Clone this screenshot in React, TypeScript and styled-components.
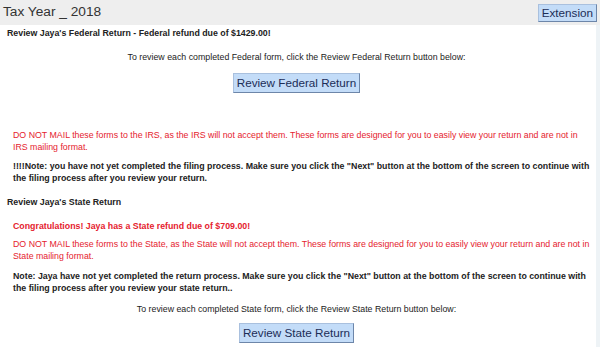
import React from "react";
import styled, { createGlobalStyle } from "styled-components";

const Global = createGlobalStyle`
  html, body { margin: 0; padding: 0; background: #ffffff; }
  body { font-family: "Liberation Sans", Arial, sans-serif; }
`;

const Page = styled.div`
  width: 600px;
  height: 347px;
  overflow: hidden;
  display: flex;
  flex-direction: column;
  background: #ffffff;
`;

const Header = styled.header`
  height: 25px;
  flex: none;
  display: flex;
  align-items: center;
  justify-content: space-between;
  padding: 0 3px 0 3px;
  background: #eeeeee;
`;

const Title = styled.h1`
  margin: 0 0 1px 0;
  font-size: 13.7px;
  font-weight: normal;
  color: #333333;
  line-height: 1;
`;

const BlueButton = styled.button<{ $small?: boolean }>`
  font-family: "Liberation Sans", Arial, sans-serif;
  font-size: 11.7px;
  color: #1c2d57;
  background: #c3dcf8;
  height: ${(p) => (p.$small ? 18 : 20)}px;
  padding: 0 3px;
  border: 1px solid;
  border-color: #a9c0de #6d86a9 #6d86a9 #a9c0de;
  line-height: 1;
  cursor: pointer;
`;

const Body = styled.div`
  flex: 1;
  display: flex;
`;

const Main = styled.main`
  flex: 1;
  padding: 0 3px 0 7px;
  font-size: 8.8px;
  line-height: 12px;
  color: #222222;
`;

const Strip = styled.div`
  width: 4px;
  flex: none;
  background: #eef3f6;
`;

const SectionTitle = styled.h2<{ $top: number }>`
  margin: ${(p) => p.$top}px 0 0 0;
  font-size: 8.8px;
  font-weight: bold;
  line-height: 12px;
`;

const CenterNote = styled.p<{ $top: number }>`
  margin: ${(p) => p.$top}px 0 0 -7px;
  text-align: center;
`;

const ButtonRow = styled.div<{ $top: number }>`
  margin: ${(p) => p.$top}px 0 0 -7px;
  display: flex;
  justify-content: center;
`;

const Indented = styled.p<{ $top: number }>`
  margin: ${(p) => p.$top}px 0 0 6px;
`;

const Warning = styled(Indented)`
  color: #e5222e;
`;

const Congrats = styled(Indented)`
  color: #e5222e;
  font-weight: bold;
`;

const Notice = styled(Indented)`
  font-weight: bold;
`;

export default function App() {
  return (
    <>
      <Global />
      <Page>
        <Header>
          <Title>Tax Year _ 2018</Title>
          <BlueButton $small>Extension</BlueButton>
        </Header>
        <Body>
          <Main>
            <SectionTitle $top={2}>
              Review Jaya's Federal Return - Federal refund due of $1429.00!
            </SectionTitle>
            <CenterNote $top={12}>
              To review each completed Federal form, click the Review Federal Return button below:
            </CenterNote>
            <ButtonRow $top={10}>
              <BlueButton>Review Federal Return</BlueButton>
            </ButtonRow>
            <Warning $top={36}>
              DO NOT MAIL these forms to the IRS, as the IRS will not accept them. These forms are
              designed for you to easily view your return and are not in IRS mailing format.
            </Warning>
            <Notice $top={7}>
              !!!!Note: you have not yet completed the filing process. Make sure you click the "Next"
              button at the bottom of the screen to continue with the filing process after you
              review your return.
            </Notice>
            <SectionTitle $top={12}>Review Jaya's State Return</SectionTitle>
            <Congrats $top={12}>Congratulations! Jaya has a State refund due of $709.00!</Congrats>
            <Warning $top={6}>
              DO NOT MAIL these forms to the State, as the State will not accept them. These forms
              are designed for you to easily view your return and are not in State mailing format.
            </Warning>
            <Notice $top={8}>
              Note: Jaya have not yet completed the return process. Make sure you click the "Next"
              button at the bottom of the screen to continue with the filing process after you
              review your state return..
            </Notice>
            <CenterNote $top={9}>
              To review each completed State form, click the Review State Return button below:
            </CenterNote>
            <ButtonRow $top={8}>
              <BlueButton>Review State Return</BlueButton>
            </ButtonRow>
          </Main>
          <Strip />
        </Body>
      </Page>
    </>
  );
}
